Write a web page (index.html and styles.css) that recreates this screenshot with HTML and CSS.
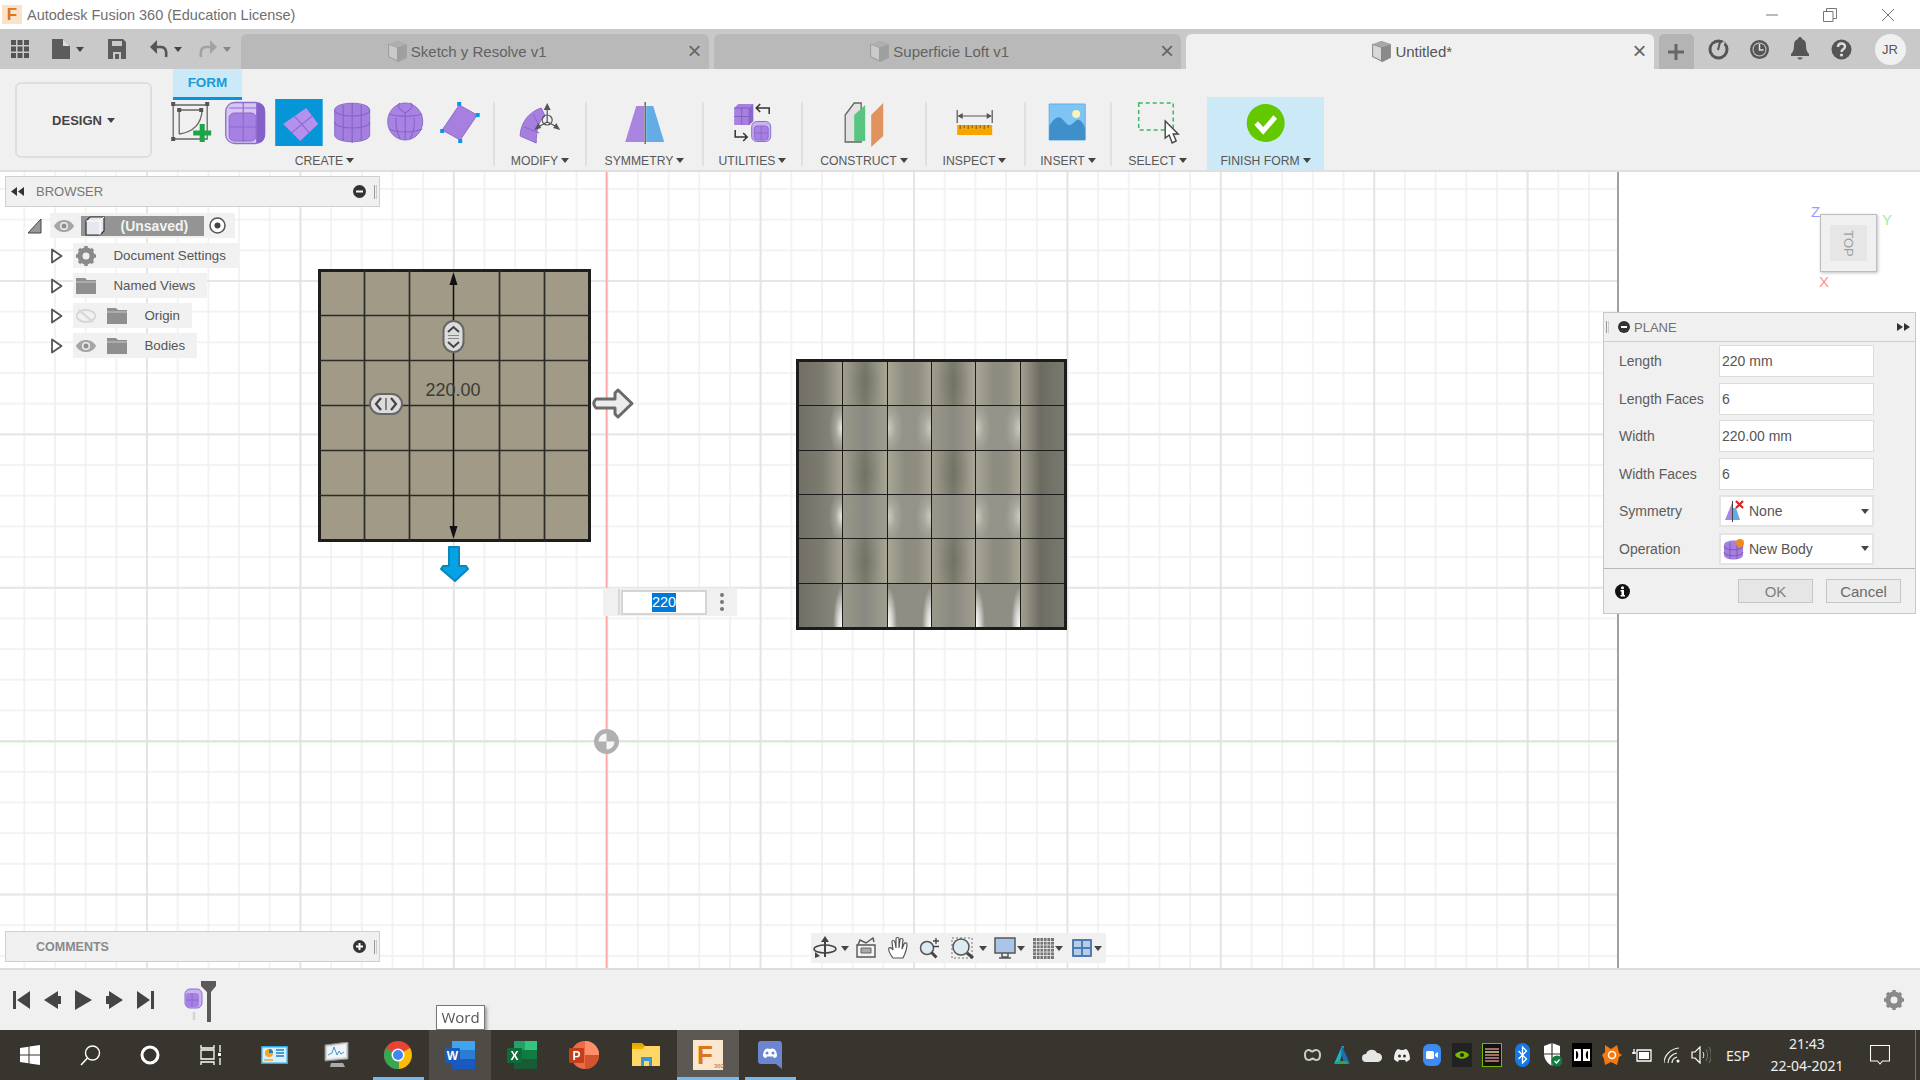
FILE: index.html
```html
<!DOCTYPE html>
<html lang="en">
<head>
<meta charset="utf-8">
<title>Autodesk Fusion 360 (Education License)</title>
<link rel="stylesheet" href="styles.css">
</head>
<body>
<svg class="defs" width="0" height="0">
  <symbol id="tabcube" viewBox="0 0 20 22"><path d="M10 1 19 4v13l-8 4-9-5V4z" fill="#8a8a8a"/><path d="M1.500 4 10 7v13l-8.500-4z" fill="#d8d8d8" stroke="#888"/><path d="M1.500 4 10 1l9 3-8 3z" fill="#a8a8a8"/></symbol>
  <symbol id="folder" viewBox="0 0 20 16"><path d="M0 0h9l2 2h9v14H0z" fill="#8f8f8f"/><path d="M0 4h20" stroke="#c8c8c8"/></symbol>
  <symbol id="eye" viewBox="0 0 20 12"><path d="M0 6c4-8 16-8 20 0-4 8-16 8-20 0z" fill="#a6a6a6"/><circle cx="10" cy="6" r="4" fill="#eee"/><circle cx="10" cy="6" r="2.500" fill="#8e8e8e"/></symbol>
  <symbol id="tri" viewBox="0 0 13 16"><path d="M2 1.500 11.500 8 2 14.500z" fill="#fff" stroke="#555" stroke-width="1.800" stroke-linejoin="round"/></symbol>
  <symbol id="caret" viewBox="0 0 8 5"><path d="M0 0h8L4 5z" fill="#444"/></symbol>
</svg>

<div class="app">
  <header class="titlebar">
    <span class="ficon">F</span>
    <span class="apptitle">Autodesk Fusion 360 (Education License)</span>
    <div class="winctl">
      <svg width="14" height="14" viewBox="0 0 14 14"><path d="M1 7h12" stroke="#777"/></svg>
      <svg width="14" height="14" viewBox="0 0 14 14"><path d="M.5 3.500h9.500v10H.5zM3.500 3.500V.5h10v10H10" fill="none" stroke="#777"/></svg>
      <svg width="14" height="14" viewBox="0 0 14 14"><path d="M1 1l12 12M13 1 1 13" stroke="#777"/></svg>
    </div>
  </header>

  <nav class="tabstrip">
    <div class="qat">
      <svg class="qat-grid" width="18" height="18" viewBox="0 0 18 18"><path fill="#555" d="M0 0h5v5H0zM6.500 0h5v5h-5zM13 0h5v5h-5zM0 6.500h5v5H0zM6.500 6.500h5v5h-5zM13 6.500h5v5h-5zM0 13h5v5H0zM6.500 13h5v5h-5zM13 13h5v5h-5z"/></svg>
      <svg class="qat-doc" width="18" height="20" viewBox="0 0 18 20"><path fill="#5c5c5c" d="M0 0h11l7 7v13H0z"/><path fill="#ddd" d="M11 0v7h7z"/></svg>
      <svg class="qat-car" width="8" height="5"><use href="#caret"/></svg>
      <svg class="qat-save" width="18" height="20" viewBox="0 0 18 20"><path fill="#5c5c5c" d="M0 0h15l3 3v17H0z"/><path fill="#c9c9c9" d="M4 2h10v5H4zM5 13h8v7H5z"/><path fill="#5c5c5c" d="M7 15h4v5H7z"/></svg>
      <svg class="qat-undo" width="18" height="18" viewBox="0 0 18 18"><path fill="none" stroke="#555" stroke-width="2.600" d="M4 7h7c4 0 6 3 5 10"/><path fill="#555" d="M7 0v14L0 7z"/></svg>
      <svg class="qat-car" width="8" height="5"><use href="#caret"/></svg>
      <svg class="qat-redo" width="18" height="18" viewBox="0 0 18 18"><path fill="none" stroke="#a2a2a2" stroke-width="2.600" d="M14 7H7C3 7 1 10 2 17"/><path fill="#a2a2a2" d="M11 0v14l7-7z"/></svg>
      <svg class="qat-car dim" width="8" height="5"><use href="#caret"/></svg>
    </div>
    <div class="tab"><svg width="21" height="23"><use href="#tabcube"/></svg><span>Sketch y Resolve v1</span><b class="tabx">×</b></div>
    <div class="tab"><svg width="21" height="23"><use href="#tabcube"/></svg><span>Superficie Loft v1</span><b class="tabx">×</b></div>
    <div class="tab active"><svg width="21" height="23"><use href="#tabcube"/></svg><span>Untitled*</span><b class="tabx">×</b></div>
    <div class="plus"><svg width="16" height="16" viewBox="0 0 16 16"><path d="M8 0v16M0 8h16" stroke="#666" stroke-width="3"/></svg></div>
    <div class="topicons">
      <svg width="21" height="21" viewBox="0 0 21 21"><circle cx="10.500" cy="10.500" r="8.500" fill="none" stroke="#555" stroke-width="3"/><path d="M5 6l6 5 5-8" fill="none" stroke="#c9c9c9" stroke-width="2.500"/><path d="M12 3l-2 8" stroke="#555" stroke-width="2"/></svg>
      <svg width="21" height="21" viewBox="0 0 21 21"><circle cx="10.500" cy="10.500" r="9.500" fill="#555"/><circle cx="10.500" cy="10.500" r="7" fill="#c9c9c9"/><circle cx="10.500" cy="10.500" r="6" fill="#555"/><path d="M10.500 5v6h4" fill="none" stroke="#ddd" stroke-width="1.500"/></svg>
      <svg width="18" height="24" viewBox="0 0 18 24"><path fill="#555" d="M9 0c1.500 0 2 1 2 2 3 1 4 3 4 6 0 5 1 7 3 9v2H0v-2c2-2 3-4 3-9 0-3 1-5 4-6 0-1 .5-2 2-2zM6.500 20.500h5C11.500 23 6.500 23 6.500 20.500z"/></svg>
      <svg class="help" width="21" height="21" viewBox="0 0 21 21"><circle cx="10.500" cy="10.500" r="10" fill="#555"/><path d="M7 8c0-4.500 7-4.500 7-.5 0 3-3.500 2.500-3.500 5.500" fill="none" stroke="#ddd" stroke-width="2.400"/><circle cx="10.500" cy="16" r="1.600" fill="#ddd"/></svg>
      <span class="avatar">JR</span>
    </div>
  </nav>

  <section class="toolbar">
    <div class="formtab">FORM</div>
    <div class="design">DESIGN <svg width="8" height="5"><use href="#caret"/></svg></div>

    <div class="group g-create">
      <div class="icons">
        <svg class="ico" viewBox="0 0 53 52"><path d="M8 8h34v34H8z" fill="none" stroke="#666" stroke-width="1.300"/><path d="M14 13v24h0M14 37c14-2 22-10 23-24H14" fill="none" stroke="#666" stroke-width="1.300"/><path fill="#555" d="M6 5h4v4H6zM40 5h4v4h-4zM6 40h4v4H6zM12 11h4v4h-4zM34 11h4v4h-4z"/><path d="M37 27v18M28 36h18" stroke="#1ba548" stroke-width="5"/></svg>
        <svg class="ico" viewBox="0 0 53 52"><rect x="6.500" y="5.500" width="39" height="41" rx="9" fill="#d6c6f4" stroke="#8c6fca" stroke-width="1.300"/><path d="M37 6c7 0 8.500 3 8.500 9v22c0 6-2 9-8.500 9z" fill="#8560c8"/><rect x="10" y="16" width="27" height="28" rx="5" fill="#a680e2" stroke="#8d6bcd"/><path d="M24 5v40M10 30h27M10 11h27" stroke="#8d6bcd" stroke-width="1.200" fill="none"/></svg>
        <svg class="ico" viewBox="0 0 53 52"><path fill="#0696d7" d="M3 2h47.500v47H3z"/><path fill="#b491ee" d="M34 11 46 27 28 44 11 27z"/><path d="M22.500 19.500 37 35.500M19.500 35.500 40 19" stroke="#8f6ed0" stroke-width="1.200"/></svg>
        <svg class="ico" viewBox="0 0 53 52"><path fill="#a57fdf" d="M9.500 13c0-9 35-9 35 0v25c0 9-35 9-35 0z" stroke="#8c6fca"/><path d="M9.500 13c0 8 35 8 35 0M9.500 25c0 8 35 8 35 0M18 8v36M27 6v40M36 8v36" fill="none" stroke="#8764c6" stroke-width="1.200"/></svg>
        <svg class="ico" viewBox="0 0 53 52"><ellipse cx="26" cy="24.500" rx="17.500" ry="18.500" fill="#a983e4" stroke="#8c6fca"/><path d="M10 17c8 3 24 3 33 0M10 32c8 4 24 4 33 0M26 16v27M26 16c-8-5-8-8-5-10M26 16c8-5 8-8 5-10M17 21c-1 8 1 15 4 21M35 21c1 8-1 15-4 21" fill="none" stroke="#8764c6" stroke-width="1.100"/></svg>
        <svg class="ico" viewBox="0 0 53 52"><path fill="#a67fe0" d="M27 8 45 18 28 43 10 33z" stroke="#8c6fca"/><path fill="#0a96e6" d="M25 5h4v4h-4zM43.500 16h4v4h-4zM26 42h4v4h-4zM8 32h4v4H8z"/></svg>
      </div>
      <div class="label">CREATE <svg width="8" height="5"><use href="#caret"/></svg></div>
    </div>
    <i class="sep"></i>

    <div class="group g-modify">
      <div class="icons">
        <svg class="ico" viewBox="0 0 53 52"><path fill="#a67fe0" d="M7 39c0-12 8-24 21-28l4 8c-7 5-9 15-9 27z" stroke="#8c6fca"/><path d="M11 30l15 6M20 17l6 12" stroke="#8764c6"/><path d="M34 12v14M25 30l9-5 10 5" fill="none" stroke="#555" stroke-width="1.200"/><path fill="#555" d="M34 6l3.500 7h-7zM21 33l4-7 3 5zM47 33l-4-7-3 5z"/><circle cx="34" cy="23" r="5" fill="none" stroke="#555" stroke-width="1.200"/></svg>
      </div>
      <div class="label">MODIFY <svg width="8" height="5"><use href="#caret"/></svg></div>
    </div>
    <i class="sep"></i>

    <div class="group g-sym">
      <div class="icons">
        <svg class="ico" viewBox="0 0 53 52"><path fill="#a985df" d="M26 9h-8L7 45h19z"/><path fill="#63ace6" d="M28 9h7l11 36H28z"/><path d="M27 5v42" stroke="#555" stroke-width="1.300"/></svg>
      </div>
      <div class="label">SYMMETRY <svg width="8" height="5"><use href="#caret"/></svg></div>
    </div>
    <i class="sep"></i>

    <div class="group g-util">
      <div class="icons">
        <svg class="ico" viewBox="0 0 53 52"><path fill="#a67fe0" d="M8 11l4-4h15v17l-4 4H8z"/><path fill="#8a65cc" d="M23 11l4-4v17l-4 4z"/><path d="M8 11h15v17M15.500 11v17M8 19.500h15" fill="none" stroke="#8063bd"/><path d="M43 17v-6H30M34 7l-4 4 4 4" fill="none" stroke="#333" stroke-width="1.500"/><path d="M9 33v7h12M17 36l4 4-4 4" fill="none" stroke="#333" stroke-width="1.500"/><rect x="25.500" y="24.500" width="19" height="20" rx="5" fill="#c9b2ef" stroke="#8c6fca"/><rect x="28" y="29" width="14" height="14" rx="3" fill="#a680e2" stroke="#8d6bcd"/><path d="M35 29v14M28 36h14" stroke="#8d6bcd"/></svg>
      </div>
      <div class="label">UTILITIES <svg width="8" height="5"><use href="#caret"/></svg></div>
    </div>
    <i class="sep"></i>

    <div class="group g-cons">
      <div class="icons">
        <svg class="ico" viewBox="0 0 53 52"><path fill="#e2e2e2" stroke="#666" stroke-width="1.300" d="M8 18 17 6h7v39H8z"/><path fill="#58c681" d="M17 18 28 8v36H17z"/><path fill="#e0925f" d="M34 18l12-12v33l-12 11z"/></svg>
      </div>
      <div class="label">CONSTRUCT <svg width="8" height="5"><use href="#caret"/></svg></div>
    </div>
    <i class="sep"></i>

    <div class="group g-insp">
      <div class="icons">
        <svg class="ico" viewBox="0 0 53 52"><path d="M9 13v13M44 13v13M10 19h33" fill="none" stroke="#555" stroke-width="1.200"/><path fill="#555" d="M9.500 19l5-3v6zM43.500 19l-5-3v6z"/><path fill="#f5a400" d="M9 28h35v10H9z"/><path d="M12 28v4M16 28v3M20 28v4M24 28v3M28 28v4M32 28v3M36 28v4M40 28v3" stroke="#6d5a20"/></svg>
      </div>
      <div class="label">INSPECT <svg width="8" height="5"><use href="#caret"/></svg></div>
    </div>
    <i class="sep"></i>

    <div class="group g-ins">
      <div class="icons">
        <svg class="ico" viewBox="0 0 53 52"><path fill="#7ec4f5" stroke="#60aee6" d="M8 7h36v36H8z"/><path fill="#3e8fca" d="M8 37l0-8c5-8 9-11 13-7 3 3 5 7 8 6 4-1 5-6 9-5 3 1 5 5 6 9v11H8z"/><circle cx="35" cy="17" r="4" fill="#fbf3b5"/></svg>
      </div>
      <div class="label">INSERT <svg width="8" height="5"><use href="#caret"/></svg></div>
    </div>
    <i class="sep"></i>

    <div class="group g-sel">
      <div class="icons">
        <svg class="ico" viewBox="0 0 53 52"><rect x="7.500" y="6" width="34.500" height="27" fill="none" stroke="#3db567" stroke-width="1.500" stroke-dasharray="4 3"/><path d="M34 24v17l4-3 3 8 4-2-3-7h5z" fill="#fff" stroke="#444" stroke-width="1.400"/></svg>
      </div>
      <div class="label">SELECT <svg width="8" height="5"><use href="#caret"/></svg></div>
    </div>

    <div class="group g-finish">
      <div class="icons">
        <svg class="ico" viewBox="0 0 53 52"><circle cx="26.500" cy="26" r="19" fill="#63c800"/><path d="M17 26l7 8 12-14" fill="none" stroke="#fff" stroke-width="5"/></svg>
      </div>
      <div class="label">FINISH FORM <svg width="8" height="5"><use href="#caret"/></svg></div>
    </div>
  </section>

  <main class="canvas">
    <svg class="scene" width="1619" height="796" viewBox="0 0 1619 796">
      <defs>
        <pattern id="minor" width="30.68" height="30.68" x="23.300" y="15.900" patternUnits="userSpaceOnUse"><path d="M1 0v31M0 1h31" stroke="#f0f0f0" stroke-width="1.600"/></pattern>
        <pattern id="major" width="153.400" height="153.400" x="146" y="108" patternUnits="userSpaceOnUse"><path d="M1 0v154M0 1h154" stroke="#e2e2e2" stroke-width="1.600"/></pattern>
      </defs>
      <rect width="1619" height="796" fill="#fff"/>
      <rect width="1619" height="796" fill="url(#minor)"/>
      <rect width="1619" height="796" fill="url(#major)"/>
      <path d="M1618 0v796" stroke="#a0a0a0" stroke-width="2"/>
      <path d="M0 569.500h1617" stroke="#c4f3c4" stroke-width="1.600"/>
      <path d="M606.500 0v796" stroke="#f9a6a6" stroke-width="1.600"/>
      <circle cx="606.500" cy="569.500" r="12.500" fill="#b0b0b0"/>
      <path d="M606.500 569.500h-8a8 8 0 0 1 8-8zM606.500 569.500h8a8 8 0 0 1-8 8z" fill="#f6f6f6"/>

      <rect x="319.500" y="98.500" width="270" height="270" fill="#a09a87" stroke="#1e1e1c" stroke-width="3"/>
      <path d="M364.500 98v271M409.500 98v271M499.500 98v271M544.500 98v271M319 143.500h271M319 188.500h271M319 233.500h271M319 278.500h271M319 323.500h271" stroke="#2a2a26" stroke-width="1.700"/>
      <path d="M453.500 108v250" stroke="#111" stroke-width="1.500"/>
      <path d="M453.500 100l-4 13h8zM453.500 367l-4-13h8z" fill="#111"/>
      <rect x="443.500" y="149" width="20" height="31" rx="10" fill="#dcdcdc" stroke="#666" stroke-width="2"/>
      <path d="M448 160l5.500-5 5.500 5M448 170l5.500 5 5.500-5" fill="none" stroke="#444" stroke-width="2"/><path d="M448 163.500h11M448 166.500h11" stroke="#888"/>
      <rect x="370" y="222" width="32" height="20" rx="10" fill="#dcdcdc" stroke="#666" stroke-width="2"/>
      <path d="M381 226l-5 6 5 6M391 226l5 6-5 6" fill="none" stroke="#444" stroke-width="2.200"/><path d="M386 226v12" stroke="#666" stroke-width="1.500"/>
      <path d="M596 227h19v-6l3-3 14 13.500-14 13.500-3-3v-6h-19c-3-3-3-6 0-9z" fill="#ececec" stroke="#6a6a6a" stroke-width="3" stroke-linejoin="round"/>
      <path d="M449 375h10v19h7l2 3-13 12-14-12 2-3h6z" fill="#05a3e6" stroke="#0a86bb" stroke-width="2" stroke-linejoin="round"/>
    </svg>
    <span class="dim-label">220.00</span>

    <div class="shaded">
      <div class="srow"><i></i><i></i><i></i><i></i><i></i><i></i></div>
      <div class="srow hi"><i></i><i></i><i></i><i></i><i></i><i></i></div>
      <div class="srow"><i></i><i></i><i></i><i></i><i></i><i></i></div>
      <div class="srow hi"><i></i><i></i><i></i><i></i><i></i><i></i></div>
      <div class="srow"><i></i><i></i><i></i><i></i><i></i><i></i></div>
      <div class="srow hi max"><i></i><i></i><i></i><i></i><i></i><i></i></div>
    </div>

    <div class="panel browser">
      <svg class="rew" width="14" height="9" viewBox="0 0 14 9"><path fill="#333" d="M6 0v9L0 4.500zM13 0v9L7 4.500z"/></svg>
      <span class="paneltitle">BROWSER</span>
      <svg class="pm" width="13" height="13" viewBox="0 0 13 13"><circle cx="6.500" cy="6.500" r="6.500" fill="#333"/><path d="M3 6.500h7" stroke="#fff" stroke-width="2"/></svg>
      <i class="grip"></i>
    </div>

    <div class="tree">
      <div class="trow root">
        <svg class="rtri" width="15" height="16" viewBox="0 0 15 16"><path d="M1 15 14 1v14z" fill="#999" stroke="#444"/></svg>
        <div class="pill rootpill">
          <svg width="20" height="12"><use href="#eye"/></svg>
          <div class="rootname">
            <svg width="20" height="20" viewBox="0 0 20 20"><path d="M1 5 5 1h14v14l-4 4H1z" fill="#e6e8f0" stroke="#333" stroke-width="1.200"/><path d="M1 5h14v14M15 5l4-4" fill="none" stroke="#fff"/></svg>
            <span>(Unsaved)</span>
          </div>
          <svg width="17" height="17" viewBox="0 0 17 17"><circle cx="8.500" cy="8.500" r="7.500" fill="#fff" stroke="#555" stroke-width="1.500"/><circle cx="8.500" cy="8.500" r="3" fill="#444"/></svg>
        </div>
      </div>
      <div class="trow">
        <svg width="13" height="16"><use href="#tri"/></svg>
        <div class="pill"><svg class="first" width="20" height="20" viewBox="0 0 20 20"><circle cx="10" cy="10" r="6" fill="none" stroke="#8a8a8a" stroke-width="5"/><path d="M10 0v20M0 10h20M3 3l14 14M17 3 3 17" stroke="#8a8a8a" stroke-width="3.500"/><circle cx="10" cy="10" r="3.500" fill="#efefef"/></svg><span class="wide">Document Settings</span></div>
      </div>
      <div class="trow">
        <svg width="13" height="16"><use href="#tri"/></svg>
        <div class="pill"><svg class="first" width="20" height="16"><use href="#folder"/></svg><span class="wide">Named Views</span></div>
      </div>
      <div class="trow">
        <svg width="13" height="16"><use href="#tri"/></svg>
        <div class="pill"><svg class="first faded" width="20" height="14" viewBox="0 0 20 14"><path d="M0 7c4-8 16-8 20 0-4 8-16 8-20 0zM3 1l14 12" fill="none" stroke="#d6d6d6" stroke-width="2"/></svg><svg width="20" height="16"><use href="#folder"/></svg><span class="narrow">Origin</span></div>
      </div>
      <div class="trow">
        <svg width="13" height="16"><use href="#tri"/></svg>
        <div class="pill"><svg class="first" width="20" height="12"><use href="#eye"/></svg><svg width="20" height="16"><use href="#folder"/></svg><span class="narrow">Bodies</span></div>
      </div>
    </div>

    <div class="viewcube">
      <span class="ax z">Z</span><span class="ax y">Y</span><span class="ax x">X</span>
      <div class="face"><span>TOP</span></div>
    </div>

    <div class="floatinput">
      <i class="fgrip"></i>
      <div class="finput"><mark>220</mark></div>
      <span class="dots"><i></i><i></i><i></i></span>
    </div>

    <div class="dialog">
      <div class="dlghead">
        <i class="dgrip"></i>
        <svg width="12" height="12" viewBox="0 0 12 12"><circle cx="6" cy="6" r="6" fill="#333"/><path d="M3 6h6" stroke="#fff" stroke-width="2"/></svg>
        <span>PLANE</span>
        <svg class="ff" width="13" height="8" viewBox="0 0 13 8"><path fill="#333" d="M0 0l6 4-6 4zM7 0l6 4-6 4z"/></svg>
      </div>
      <div class="dlgbody">
        <label>Length</label><div class="field">220 mm</div>
        <label>Length Faces</label><div class="field">6</div>
        <label>Width</label><div class="field">220.00 mm</div>
        <label>Width Faces</label><div class="field">6</div>
        <label>Symmetry</label>
        <div class="field select">
          <svg width="22" height="22" viewBox="0 0 22 22"><path d="M9 3 2 20h7z" fill="#a985df"/><path d="M10 8h3l4 12h-7z" fill="#63ace6"/><path d="M9.500 1v21" stroke="#444"/><path d="M13 1l7 7M20 1l-7 7" stroke="#d22" stroke-width="2.200"/></svg>
          <span>None</span><svg class="selcar" width="8" height="5"><use href="#caret"/></svg>
        </div>
        <label>Operation</label>
        <div class="field select">
          <svg width="22" height="22" viewBox="0 0 22 22"><path d="M1 7c0-6 19-6 19 0v10c0 6-19 6-19 0z" fill="#a67fe0"/><path d="M1 8c0 5 19 5 19 0M1 14c0 5 19 5 19 0M7 5v16M14 5v16" fill="none" stroke="#7a5cb8"/><circle cx="17" cy="5" r="4" fill="#f08a1d"/></svg>
          <span>New Body</span><svg class="selcar" width="8" height="5"><use href="#caret"/></svg>
        </div>
      </div>
      <div class="dlgfoot">
        <svg width="15" height="15" viewBox="0 0 15 15"><circle cx="7.500" cy="7.500" r="7.500" fill="#111"/><circle cx="7.500" cy="3.800" r="1.500" fill="#fff"/><path fill="#fff" d="M5.500 6H9v5h1v1.500H5.500V11h1V7.500h-1z"/></svg>
        <button class="btn ok">OK</button>
        <button class="btn">Cancel</button>
      </div>
    </div>

    <div class="panel comments">
      <span class="paneltitle">COMMENTS</span>
      <svg class="pm" width="13" height="13" viewBox="0 0 13 13"><circle cx="6.500" cy="6.500" r="6.500" fill="#333"/><path d="M3 6.500h7M6.500 3v7" stroke="#fff" stroke-width="2"/></svg>
      <i class="grip"></i>
    </div>

    <div class="navbar">
      <svg width="24" height="24" viewBox="0 0 24 24"><path d="M12 4v17" stroke="#444" stroke-width="2"/><path d="M12 0l4 6H8z" fill="#444"/><ellipse cx="12" cy="13" rx="11" ry="4" fill="none" stroke="#444" stroke-width="1.500"/><path d="M2 16l5 4-5 2z" fill="#444"/></svg>
      <svg width="8" height="5"><use href="#caret"/></svg>
      <svg width="22" height="22" viewBox="0 0 22 22"><path d="M2 8h18v12H2z" fill="#f4f4f4" stroke="#555" stroke-width="1.400"/><path d="M6 11h10v5H6z" fill="#aaa" stroke="#666"/><path d="M3 8l2-5 6 3 7-5 1 4" fill="none" stroke="#555" stroke-width="1.400"/></svg>
      <svg width="22" height="24" viewBox="0 0 22 24"><path d="M6 22C3 18 1 14 2 12c1-1 3 0 4 2L5 6c0-2 2-2 3 0l1 6V3c0-2 3-2 3 0v9l1-8c0-2 3-2 3 0l-1 9 2-5c1-2 3-1 3 0 0 5-2 10-4 14z" fill="#fff" stroke="#555" stroke-width="1.200"/></svg>
      <svg width="22" height="22" viewBox="0 0 22 22"><circle cx="8" cy="11" r="6.500" fill="#dcebf2" stroke="#555" stroke-width="1.500"/><path d="M12.500 15.500l5 5" stroke="#444" stroke-width="3"/><path d="M17 1v6M14 4h6M14 9.500h6" stroke="#444" stroke-width="1.300"/></svg>
      <svg width="24" height="22" viewBox="0 0 24 22"><path d="M1 1h20v20H1z" fill="none" stroke="#777" stroke-dasharray="2 2"/><circle cx="10" cy="10" r="8" fill="#dcebf2" stroke="#555" stroke-width="1.500"/><path d="M16 16l6 5" stroke="#444" stroke-width="3"/></svg>
      <svg width="8" height="5"><use href="#caret"/></svg>
      <svg width="22" height="22" viewBox="0 0 22 22"><path d="M1 1h20v15H1z" fill="#a9c6e8" stroke="#555" stroke-width="1.500"/><path d="M8 16v4h6v-4M5 21h12" fill="none" stroke="#555" stroke-width="1.500"/></svg>
      <svg width="8" height="5"><use href="#caret"/></svg>
      <svg width="21" height="21" viewBox="0 0 21 21"><rect width="21" height="21" fill="#777"/><path d="M3.500 0v21M7 0v21M10.500 0v21M14 0v21M17.500 0v21M0 3.500h21M0 7h21M0 10.500h21M0 14h21M0 17.500h21" stroke="#eee" stroke-width=".8"/></svg>
      <svg width="8" height="5"><use href="#caret"/></svg>
      <svg width="20" height="18" viewBox="0 0 20 18"><rect width="20" height="18" rx="1" fill="#4f7bb0"/><path fill="#b5cde8" d="M2 2h7v6H2zM11 2h7v6h-7zM2 10h7v6H2zM11 10h7v6h-7z"/></svg>
      <svg width="8" height="5"><use href="#caret"/></svg>
    </div>
  </main>

  <footer class="timeline">
    <div class="controls">
      <svg width="17" height="18" viewBox="0 0 17 18"><path fill="#444" d="M0 0h3v18H0zM17 0v18L4 9z"/></svg>
      <svg width="17" height="18" viewBox="0 0 17 18"><path fill="#444" d="M14 0v18L0 9zM14 5h3v8h-3z" /></svg>
      <svg width="17" height="20" viewBox="0 0 17 20"><path fill="#444" d="M0 0v20l17-10z"/></svg>
      <svg width="17" height="18" viewBox="0 0 17 18"><path fill="#444" d="M3 0v18l14-9zM0 5h3v8H0z"/></svg>
      <svg width="17" height="18" viewBox="0 0 17 18"><path fill="#444" d="M14 0h3v18h-3zM0 0v18l13-9z"/></svg>
      <svg class="feature" width="34" height="42" viewBox="0 0 34 42"><rect x="1" y="9" width="17" height="19" rx="5" fill="#c9b2ef" stroke="#8c6fca"/><rect x="2" y="13" width="13" height="14" rx="3" fill="#a680e2"/><path d="M8 13v14M2 20h13" stroke="#8d6bcd"/><path d="M10 32v8" stroke="#d4d4d4" stroke-width="2.500"/><path d="M17 1h15v5l-5 6v30h-4V12l-6-6z" fill="#5a5a5a"/></svg>
    </div>
    <svg class="tlgear" width="20" height="20" viewBox="0 0 20 20"><circle cx="10" cy="10" r="6" fill="none" stroke="#8a8a8a" stroke-width="5"/><path d="M10 0v20M0 10h20M3 3l14 14M17 3 3 17" stroke="#8a8a8a" stroke-width="3.500"/><circle cx="10" cy="10" r="3.500" fill="#f0f0f0"/></svg>
    <div class="tooltip">Word</div>
  </footer>
</div>

<div class="taskbar">
  <div class="t s60"><svg width="20" height="20" viewBox="0 0 20 20"><path fill="#fff" d="M0 3l8.500-1.300V9.500H0zM9.500 1.500 20 0v9.500H9.500zM0 10.500h8.500v7.800L0 17zM9.500 10.500H20V20L9.500 18.500z"/></svg></div>
  <div class="t s60"><svg width="21" height="21" viewBox="0 0 21 21"><circle cx="12.500" cy="8" r="7" fill="none" stroke="#fff" stroke-width="1.400"/><path d="M7.500 13 1 20" stroke="#fff" stroke-width="1.500"/></svg></div>
  <div class="t s60"><svg width="20" height="20" viewBox="0 0 20 20"><circle cx="10" cy="10" r="8" fill="none" stroke="#fff" stroke-width="3"/></svg></div>
  <div class="t s60"><svg width="21" height="20" viewBox="0 0 21 20"><path d="M1 0v3h13V0M1 5h13v9H1zM1 20v-3h13v3M20 0v7M20 13v7" fill="none" stroke="#fff" stroke-width="1.300"/><path d="M18 8h3v3h-3z" fill="#fff"/></svg></div>
  <div class="t"><svg width="27" height="18" viewBox="0 0 27 18"><rect width="27" height="18" fill="#29a9ec"/><rect x="1.500" y="1.500" width="24" height="15" fill="#d9f0fb"/><circle cx="8" cy="7" r="4" fill="#f5a623"/><path d="M8 7V3a4 4 0 0 1 4 4z" fill="#1c7ec4"/><path d="M15 4h8M15 7h8M15 10h8" stroke="#1c7ec4" stroke-width="1.500"/><path d="M3 14h9" stroke="#f5a623" stroke-width="1.500"/></svg></div>
  <div class="t"><svg width="28" height="26" viewBox="0 0 28 26"><path d="M3 3 26 0v17L3 19z" fill="#d5d5d5" stroke="#888"/><path d="M5 5l19-3v13L5 17z" fill="#eef6fb"/><path d="M6 13l4-2 2-6 3 8 2-4 2 3 3-2" fill="none" stroke="#4a90c0"/><path d="M9 21h12l2 4H8z" fill="#aaa"/></svg></div>
  <div class="t open"><svg width="28" height="28" viewBox="0 0 28 28"><circle cx="14" cy="14" r="14" fill="#ea4335"/><path d="M14 14 26 7a14 14 0 0 1-11 21z" fill="#fbbc05"/><path d="M14 14 15 28A14 14 0 0 1 2 7z" fill="#34a853"/><circle cx="14" cy="14" r="6.500" fill="#fff"/><circle cx="14" cy="14" r="5" fill="#4285f4"/></svg></div>
  <div class="t hover"><svg width="30" height="28" viewBox="0 0 30 28"><rect x="7" width="23" height="28" rx="1" fill="#2b7cd3"/><path fill="#41a5ee" d="M7 0h23v9H7z"/><path fill="#185abd" d="M7 18h23v10H7z"/><rect y="7" width="15" height="15" rx="1" fill="#185abd"/><text x="7.500" y="19" class="lt">W</text></svg></div>
  <div class="t"><svg width="30" height="28" viewBox="0 0 30 28"><rect x="7" width="23" height="28" rx="1" fill="#107c41"/><path fill="#33c481" d="M18 0h12v9H18z"/><path fill="#21a366" d="M7 0h11v9H7z"/><path fill="#185c37" d="M7 18h23v10H7z"/><rect y="7" width="15" height="15" rx="1" fill="#0f6b39"/><text x="7.500" y="19" class="lt">X</text></svg></div>
  <div class="t"><svg width="30" height="28" viewBox="0 0 30 28"><circle cx="16" cy="14" r="14" fill="#ed6c47"/><path d="M16 14V0a14 14 0 0 1 14 14z" fill="#ff8f6b"/><path d="M16 14h14a14 14 0 0 1-14 14z" fill="#d35230"/><rect y="7" width="15" height="15" rx="1" fill="#c43e1c"/><text x="7.500" y="19" class="lt">P</text></svg></div>
  <div class="t"><svg width="28" height="24" viewBox="0 0 28 24"><path d="M0 0h10l3 3h-13z" fill="#e0a800"/><path d="M0 3h28v20H0z" fill="#ffd766"/><path d="M0 3h13l-2 3H0z" fill="#f0b400"/><path d="M9 14h11v9h-3v-5h-5v5H9z" fill="#3a96dd"/></svg></div>
  <div class="t active"><div class="ftile"><span class="fbig">F</span><small>360</small></div></div>
  <div class="t open"><svg width="24" height="28" viewBox="0 0 24 28"><path d="M3 0h18a3 3 0 0 1 3 3v25l-6-5H3a3 3 0 0 1-3-3V3a3 3 0 0 1 3-3z" fill="#6b85d1"/><path d="M5 15c0-4 2-7 3-7 2-1 3 0 4 0s2-1 4 0c1 0 3 3 3 7-1 2-3 2-3 2l-1-1.500H9L8 17s-2 0-3-2z" fill="#fff"/><circle cx="9" cy="12" r="1.500" fill="#6b85d1"/><circle cx="15" cy="12" r="1.500" fill="#6b85d1"/></svg></div>

  <div class="tray">
    <div class="ti"><svg width="17" height="12" viewBox="0 0 17 12"><path d="M8 3C6 0 1 0 1 6s5 6 8 3M9 9c2 3 7 3 7-3S11 0 8 3" fill="none" stroke="#ccc" stroke-width="2"/></svg></div>
    <div class="ti"><svg width="16" height="18" viewBox="0 0 16 18"><path d="M8 0 0 18l6-3L10 0z" fill="#1eb4c8"/><path d="M8 0l8 18-6 0L7 6z" fill="#1f6fb2"/><path d="M0 18l6-3h7l1 3z" fill="#2aa84a"/></svg></div>
    <div class="ti"><svg width="20" height="13" viewBox="0 0 20 13"><path d="M4 13a4 4 0 0 1 0-8 6 6 0 0 1 11-1 4.500 4.500 0 0 1 1 9z" fill="#e6e6e6"/></svg></div>
    <div class="ti"><svg width="18" height="14" viewBox="0 0 18 14"><path d="M1 11C1 6 3 2 5 1l3 1h2l3-1c2 1 4 5 4 10-1 2-4 3-4 3l-1-2H6l-1 2s-3-1-4-3z" fill="#eee"/><circle cx="6.500" cy="8" r="1.500" fill="#38352f"/><circle cx="11.500" cy="8" r="1.500" fill="#38352f"/></svg></div>
    <div class="ti"><svg width="18" height="22" viewBox="0 0 18 22"><rect width="18" height="22" rx="6" fill="#3d8bf2"/><rect x="3" y="7" width="8" height="8" rx="1.500" fill="#fff"/><path d="M12 10l3-2v6l-3-2z" fill="#fff"/></svg></div>
    <div class="ti"><svg width="20" height="24" viewBox="0 0 20 24"><rect width="20" height="24" fill="#222"/><path d="M3 12c3-5 11-5 14 0-3 5-11 5-14 0z" fill="#76b900"/><circle cx="10" cy="12" r="2" fill="#222"/></svg></div>
    <div class="ti"><svg width="20" height="24" viewBox="0 0 20 24"><rect x=".5" y=".5" width="19" height="23" fill="#111" stroke="#76b900"/><path d="M3 6h14M3 9h14M3 12h14M3 15h14M3 18h14" stroke="#d28a8a" stroke-width="1.600"/><path d="M3 9h14" stroke="#a0c060" stroke-width="1.600"/></svg></div>
    <div class="ti"><svg width="15" height="24" viewBox="0 0 15 24"><rect width="15" height="24" rx="7.500" fill="#1479e8"/><path d="M3.500 8l8 8-4 4V4l4 4-8 8" fill="none" stroke="#fff" stroke-width="1.300"/></svg></div>
    <div class="ti"><svg width="19" height="24" viewBox="0 0 19 24"><path d="M9 0l8 3v8c0 5-4 10-8 12-4-2-8-7-8-12V3z" fill="#fff"/><path d="M9 0v23M1 11h16" stroke="#38352f" stroke-width="1.200"/><circle cx="14" cy="18" r="5.500" fill="#107c41"/><path d="M11.500 18l2 2 3-3.500" fill="none" stroke="#fff" stroke-width="1.300"/></svg></div>
    <div class="ti"><svg width="20" height="24" viewBox="0 0 20 24"><rect width="20" height="24" fill="#000"/><path fill="#fff" d="M2 6h7v12H2zM11 6h7v12h-7z"/><path fill="#000" d="M4 8c3 0 3 8 0 8zM16 8c-3 0-3 8 0 8z"/></svg></div>
    <div class="ti"><svg width="20" height="20" viewBox="0 0 20 20"><path d="M3 0l6 4 6-4 2 8 3 2-3 2-2 8-6-3-6 3-1-6-2-4 3-3z" fill="#f47a10"/><circle cx="10" cy="10" r="3.500" fill="none" stroke="#fff" stroke-width="1.500"/></svg></div>
    <div class="ti"><svg width="20" height="14" viewBox="0 0 20 14"><path d="M5 2h14v11H5z" fill="none" stroke="#fff" stroke-width="1.300"/><path d="M7 4h10v7H7z" fill="#fff"/><path d="M0 5h4M2 1v5" stroke="#fff" stroke-width="1.300"/></svg></div>
    <div class="ti"><svg width="16" height="16" viewBox="0 0 16 16"><path d="M0 16C0 9 6 2 15 1M4 16c0-5 4-9 9-10M8 16c0-3 2-5 5-6" fill="none" stroke="#eee" stroke-width="1.200"/><circle cx="14" cy="14" r="1.500" fill="#fff"/></svg></div>
    <div class="ti spk"><svg width="20" height="18" viewBox="0 0 20 18"><path d="M1 6h3l5-5v16l-5-5H1z" fill="none" stroke="#fff" stroke-width="1.200"/><path d="M12 6c1 2 1 4 0 6" fill="none" stroke="#eee"/><path d="M15 3c2 4 2 8 0 12M18 1c3 5 3 11 0 16" fill="none" stroke="#777"/></svg></div>
    <div class="lang">ESP</div>
    <div class="clock"><span>21:43</span><span>22-04-2021</span></div>
    <div class="action"><svg width="20" height="20" viewBox="0 0 20 20"><path d="M.5.500h19v15.500h-7L10 19l-2.500-3H.5z" fill="none" stroke="#fff" stroke-width="1.100"/></svg></div>
    <i class="showdesk"></i>
  </div>
</div>
</body>
</html>
```

FILE: styles.css
```css
* { box-sizing: border-box; }
html, body { margin: 0; padding: 0; }
body {
  width: 1920px;
  height: 1080px;
  overflow: hidden;
  font-family: "Liberation Sans", Arial, sans-serif;
  background: #fff;
  color: #555;
}
.defs { position: absolute; }
svg { display: block; flex: none; }
i { font-style: normal; }

.app {
  height: 1030px;
  display: flex;
  flex-direction: column;
  filter: blur(.35px);
}

/* title bar */
.titlebar {
  height: 29px;
  flex: none;
  display: flex;
  align-items: center;
  background: #fff;
  padding-left: 2px;
}
.ficon {
  width: 20px;
  height: 19px;
  background: #fbe3c8;
  color: #d9771a;
  font: bold 17px/19px "Liberation Sans", sans-serif;
  text-align: center;
}
.apptitle {
  margin-left: 5px;
  font-size: 14.500px;
  color: #6f6f6f;
}
.winctl {
  margin-left: auto;
  display: flex;
  gap: 44px;
  padding-right: 25px;
}

/* tab strip */
.tabstrip {
  height: 40px;
  flex: none;
  display: flex;
  align-items: flex-end;
  background: #c9c9c9;
}
.qat {
  width: 241px;
  height: 40px;
  flex: none;
  display: flex;
  align-items: center;
  padding-left: 11px;
}
.qat-doc { margin-left: 23px; }
.qat-car { margin-left: 6px; }
.qat-car.dim { opacity: .5; }
.qat-save { margin-left: 24px; }
.qat-undo { margin-left: 24px; }
.qat-redo { margin-left: 17px; }
.tab {
  position: relative;
  width: 467.500px;
  height: 35px;
  margin-right: 5px;
  flex: none;
  display: flex;
  align-items: center;
  justify-content: center;
  gap: 3px;
  padding-right: 16px;
  background: #b9b9b9;
  border-radius: 6px 6px 0 0;
  font-size: 15px;
  color: #626262;
}
.tab.active { background: #f0f0f0; color: #555; }
.tab svg { opacity: .55; }
.tab.active svg { opacity: 1; }
.tabx {
  position: absolute;
  right: 7px;
  top: 5px;
  font: normal 24px/24px "Liberation Sans", sans-serif;
  color: #666;
}
.plus {
  width: 35px;
  height: 35px;
  flex: none;
  display: flex;
  align-items: center;
  justify-content: center;
  background: #b4b4b4;
  border-radius: 5px 5px 0 0;
}
.topicons {
  flex: 1;
  height: 40px;
  display: flex;
  align-items: center;
  padding-left: 14px;
  gap: 20.500px;
}
.help { margin-left: 2px; }
.avatar {
  width: 31px;
  height: 31px;
  margin-left: 2px;
  border-radius: 50%;
  background: #f0f0f0;
  font-size: 13px;
  line-height: 31px;
  text-align: center;
  color: #555;
}

/* toolbar */
.toolbar {
  position: relative;
  height: 103px;
  flex: none;
  display: flex;
  align-items: stretch;
  padding: 28px 0 0 15px;
  background: #f0f0f0;
  border-bottom: 2px solid #dfdfdf;
}
.formtab {
  position: absolute;
  left: 173px;
  top: 0;
  width: 69px;
  height: 31px;
  background: #cbe9f6;
  border-bottom: 3px solid #0696d7;
  color: #1a9bd7;
  font-weight: bold;
  font-size: 13.500px;
  line-height: 28px;
  text-align: center;
}
.design {
  width: 137px;
  height: 76px;
  margin: -15px 13.300px 0 0;
  flex: none;
  display: flex;
  align-items: center;
  justify-content: center;
  gap: 5px;
  border: 2px solid #dedede;
  border-radius: 6px;
  font-size: 13px;
  font-weight: bold;
  color: #444;
}
.group {
  flex: none;
  display: flex;
  flex-direction: column;
  align-items: center;
}
.icons { display: flex; height: 52px; }
.ico { width: 53.400px; height: 52px; }
.label {
  height: 21px;
  padding-top: 2px;
  display: flex;
  align-items: center;
  gap: 3px;
  font-size: 12.200px;
  white-space: nowrap;
  color: #585858;
}
.sep {
  flex: none;
  width: 2px;
  margin: 5px 0 4px;
  background: #e0e0e0;
}
.g-create { width: 318.400px; margin-right: 9.300px; }
.g-create .icons { width: 320.400px; flex: none; align-self: flex-start; }
.g-modify { width: 90px; }
.g-sym { width: 115px; }
.g-util { width: 97px; }
.g-cons { width: 122px; }
.g-insp { width: 95px; margin-right: 2px; }
.g-ins { width: 84px; }
.g-sel { width: 91px; margin-right: 4px; }
.g-finish { width: 117px; background: #cbe9f6; }

/* canvas */
.canvas {
  position: relative;
  flex: 1;
  overflow: hidden;
  background: #fff;
}
.scene { position: absolute; left: 0; top: 0; }
.dim-label {
  position: absolute;
  left: 425.500px;
  top: 207px;
  font-size: 18px;
  line-height: 22px;
  color: #3c3a34;
}
.shaded {
  position: absolute;
  left: 796px;
  top: 187px;
  width: 271px;
  height: 271px;
  padding: 3px;
  display: flex;
  flex-direction: column;
  gap: 1px;
  background: #1c1c1a;
}
.srow { flex: 1; display: flex; gap: 1px; }
.srow i {
  flex: 1;
  background:
    radial-gradient(ellipse 40% 60% at 50% 50%, rgba(80,80,70,.2), rgba(80,80,70,0)),
    linear-gradient(90deg, #a09e8e, #7a7a6d 50%, #a9a696);
}
.srow i:nth-child(odd) { background: linear-gradient(90deg, #a8a695, #8d8c80 40%, #908e81 70%, #aaa695); }
.srow i:first-child { background: linear-gradient(90deg, #726f66, #7d7c70 55%, #a8a494); }
.srow i:last-child { background: linear-gradient(90deg, #a29f8f, #6c6b61 45%, #7a7b70); }
.srow.hi i { background: linear-gradient(90deg, #9a9889, #8a8981 50%, #a09e8f); }
.srow.hi i:nth-child(odd) {
  background:
    radial-gradient(ellipse 15px 65% at 0 50%, rgba(225,223,210,.75), rgba(225,223,210,.25) 50%, rgba(225,223,210,0)),
    radial-gradient(ellipse 15px 65% at 100% 50%, rgba(225,223,210,.75), rgba(225,223,210,.25) 50%, rgba(225,223,210,0)),
    linear-gradient(90deg, #96958a, #94938a 50%, #96958a);
}
.srow.hi i:first-child {
  background:
    radial-gradient(ellipse 13px 65% at 100% 50%, rgba(250,250,240,.85), rgba(250,250,240,.25) 50%, rgba(250,250,240,0)),
    linear-gradient(90deg, #706f66, #807f75 60%, #8c8b80);
}
.srow.hi i:last-child { background: linear-gradient(90deg, #a29f8f, #6e6d63 45%, #7a7b70); }
.srow.max i:nth-child(odd) {
  background:
    radial-gradient(ellipse 9px 95% at 0 100%, #fff, rgba(255,255,255,.65) 45%, rgba(255,255,255,0)),
    radial-gradient(ellipse 9px 95% at 100% 100%, #fff, rgba(255,255,255,.65) 45%, rgba(255,255,255,0)),
    linear-gradient(90deg, #8f8e84, #8f8e84);
}
.srow.max i:first-child {
  background:
    radial-gradient(ellipse 9px 95% at 100% 100%, #fff, rgba(255,255,255,.65) 45%, rgba(255,255,255,0)),
    linear-gradient(90deg, #706f66, #807f75 60%, #8c8b80);
}
.srow.max i:last-child { background: linear-gradient(90deg, #a29f8f, #6e6d63 45%, #7a7b70); }

.panel {
  position: absolute;
  left: 5px;
  width: 375px;
  height: 31px;
  display: flex;
  align-items: center;
  background: #f0f0f0;
  border: 1px solid #cfcfcf;
  font-size: 13px;
  color: #777;
}
.browser { top: 4px; }
.comments { top: 759px; padding-left: 30px; }
.comments .paneltitle { font-weight: bold; font-size: 12.500px; color: #8a8a8a; }
.rew { margin-left: 5px; margin-right: 11px; }
.pm { margin-left: auto; margin-right: 8px; }
.grip {
  width: 3px;
  height: 14px;
  margin-right: 2px;
  border-left: 1px solid #999;
  border-right: 1px solid #ccc;
}

.tree {
  position: absolute;
  left: 26.500px;
  top: 41px;
  display: flex;
  flex-direction: column;
  gap: 5px;
  font-size: 13.300px;
  color: #555;
}
.trow {
  height: 25px;
  display: flex;
  align-items: center;
  padding-left: 23px;
}
.trow.root { padding-left: 0; }
.rtri { margin-right: 8px; }
.pill {
  height: 25px;
  margin-left: 10px;
  display: flex;
  align-items: center;
  background: #f1f1f1;
  padding-right: 12px;
}
.pill .first { margin-left: 3px; }
.wide { margin-left: 18px; }
.narrow { margin-left: 18px; }
.pill .first + svg { margin-left: 11px; }
.rootpill { margin-left: 0; padding: 0 9px 0 4px; width: 185px; }
.rootname {
  width: 123px;
  height: 20px;
  margin: 0 5px 0 7px;
  display: flex;
  align-items: center;
  padding-left: 4px;
  background: #949494;
  color: #f2f2f2;
  font-weight: bold;
  font-size: 14px;
}
.rootname span { margin-left: 16px; }

/* view cube */
.viewcube {
  position: absolute;
  left: 1820px;
  top: 42px;
  width: 57px;
  height: 58px;
  border: 1px solid #bdbdbd;
  background: #f0f0f0;
  box-shadow: 1px 1px 3px rgba(0,0,0,.25);
}
.face {
  margin: 10px 9px;
  width: 37px;
  height: 36px;
  background: #e6e6e6;
  display: flex;
  align-items: center;
  justify-content: center;
}
.face span {
  transform: rotate(90deg);
  font-size: 13px;
  color: #a0a0a0;
}
.ax { position: absolute; font-size: 15px; }
.ax.z { left: -10px; top: -12px; color: #9a9aff; }
.ax.y { left: 61px; top: -4px; color: #98f098; }
.ax.x { left: -2px; top: 58px; color: #ff9090; }

/* floating input */
.floatinput {
  position: absolute;
  left: 603px;
  top: 416px;
  width: 134px;
  height: 28px;
  display: flex;
  align-items: center;
  background: #f0f0f0;
}
.fgrip {
  width: 5px;
  height: 26px;
  margin-left: 12px;
  border-right: 2px solid #d8d8d8;
}
.finput {
  width: 86px;
  height: 25px;
  margin-left: 1px;
  border: 2px solid #d4d4d4;
  background: #fff;
  text-align: center;
  font-size: 14.500px;
  line-height: 21px;
}
.finput mark { background: #0078d7; color: #fff; display: inline-block; height: 19px; line-height: 19px; }
.dots {
  margin-left: 13px;
  display: flex;
  flex-direction: column;
  gap: 3px;
}
.dots i { width: 4px; height: 4px; border-radius: 50%; background: #777; }

/* dialog */
.dialog {
  position: absolute;
  left: 1603px;
  top: 140px;
  width: 313px;
  height: 302px;
  background: #f0f0f0;
  border: 1px solid #c8c8c8;
  font-size: 14px;
  color: #5c5c5c;
}
.dlghead {
  height: 29px;
  display: flex;
  align-items: center;
  gap: 4px;
  border-bottom: 1px solid #cfcfcf;
  font-size: 13px;
  color: #707070;
}
.dgrip { width: 3px; height: 12px; margin: 0 5px 0 2px; border-left: 1px solid #999; border-right: 1px solid #ccc; }
.ff { margin-left: auto; margin-right: 5px; }
.dlgbody {
  height: 227px;
  padding: 3px 0 0 15px;
  display: grid;
  grid-template-columns: 100px 155px;
  grid-auto-rows: 32px;
  row-gap: 5.500px;
  align-items: center;
  border-bottom: 1px solid #b8b8b8;
}
.field {
  height: 32px;
  display: flex;
  align-items: center;
  padding-left: 2px;
  background: #fff;
  border: 1.500px solid #dcdcdc;
  color: #555;
}
.select { border-width: 2px; border-color: #e4e4e4; gap: 4px; padding-left: 2px; }
.selcar { margin-left: auto; margin-right: 3px; }
.dlgfoot {
  height: 44px;
  display: flex;
  align-items: center;
  padding: 0 14px 0 11px;
  gap: 13px;
}
.dlgfoot svg { margin-right: auto; }
.btn {
  width: 75px;
  height: 24px;
  padding: 0;
  background: #ececec;
  border: 1.500px solid #c6c6c6;
  font: 15px "Liberation Sans", sans-serif;
  color: #6a6a6a;
}
.btn.ok { color: #808080; background: #e6e6e6; }

/* nav bar */
.navbar {
  position: absolute;
  left: 811px;
  top: 761px;
  width: 295px;
  height: 30px;
  display: flex;
  align-items: center;
  background: #f0f0f0;
}
.navbar svg:nth-child(1) { margin-left: 2px; }
.navbar svg:nth-child(2) { margin-left: 4px; }
.navbar svg:nth-child(3) { margin-left: 6px; }
.navbar svg:nth-child(4) { margin-left: 10px; }
.navbar svg:nth-child(5) { margin-left: 10px; }
.navbar svg:nth-child(6) { margin-left: 10px; }
.navbar svg:nth-child(7) { margin-left: 4px; }
.navbar svg:nth-child(8) { margin-left: 7px; }
.navbar svg:nth-child(9) { margin-left: 1px; }
.navbar svg:nth-child(10) { margin-left: 7.500px; }
.navbar svg:nth-child(11) { margin-left: 1.500px; }
.navbar svg:nth-child(12) { margin-left: 9px; }
.navbar svg:nth-child(13) { margin-left: 2px; }

/* timeline */
.timeline {
  position: relative;
  height: 62px;
  flex: none;
  display: flex;
  align-items: center;
  padding-left: 13px;
  background: #f0f0f0;
  border-top: 2px solid #dcdcdc;
}
.controls { display: flex; align-items: center; gap: 14px; }
.feature { margin-left: 15.500px; margin-top: 2px; }
.tlgear { margin-left: auto; margin-right: 16px; }
.tooltip {
  position: absolute;
  left: 436px;
  top: 35px;
  width: 49px;
  height: 25px;
  background: #fff;
  border: 1.500px solid #777;
  box-shadow: 2px 2px 3px rgba(0,0,0,.35);
  font: 15px/22px "Open Sans", sans-serif;
  color: #555;
  text-align: center;
}

/* taskbar */
.taskbar {
  height: 50px;
  display: flex;
  align-items: stretch;
  background: #38352f;
  color: #f0f0f0;
}
.t {
  position: relative;
  width: 62px;
  flex: none;
  display: flex;
  align-items: center;
  justify-content: center;
}
.s60 { width: 60px; }
.s60:nth-child(4) { margin-right: 3px; }
.t.hover { background: #4f4c47; }
.t.active { background: #5c5955; }
.t.open::after, .t.active::after {
  content: "";
  position: absolute;
  left: 5.500px;
  right: 5.500px;
  bottom: 0;
  height: 3px;
  background: #76b9ed;
}
.t.active::after { left: 0; right: 0; }
.lt { font: bold 12px "Liberation Sans", sans-serif; fill: #fff; text-anchor: middle; }
.ftile {
  width: 30px;
  height: 30px;
  padding-left: 4px;
  display: flex;
  align-items: flex-end;
  background: #fbe6d0;
}
.fbig { font: bold 26px/29px "Liberation Sans", sans-serif; color: #d9771a; }
.ftile small {
  margin-left: 1px;
  font-size: 6px;
  line-height: 8px;
  color: #c06a1a;
}
.tray {
  margin-left: auto;
  display: flex;
  align-items: center;
}
.ti {
  width: 30px;
  display: flex;
  justify-content: center;
}
.ti.spk { width: 28px; }
.lang { width: 46px; text-align: center; font: 14px "Noto Sans", sans-serif; }
.clock {
  width: 92px;
  display: flex;
  flex-direction: column;
  align-items: center;
  gap: 2px;
  font: 14px/20px "Noto Sans", sans-serif;
}
.action { width: 62px; display: flex; justify-content: center; padding-right: 8px; }
.showdesk { width: 1px; height: 50px; background: #77746f; margin-right: 4px; }
```
